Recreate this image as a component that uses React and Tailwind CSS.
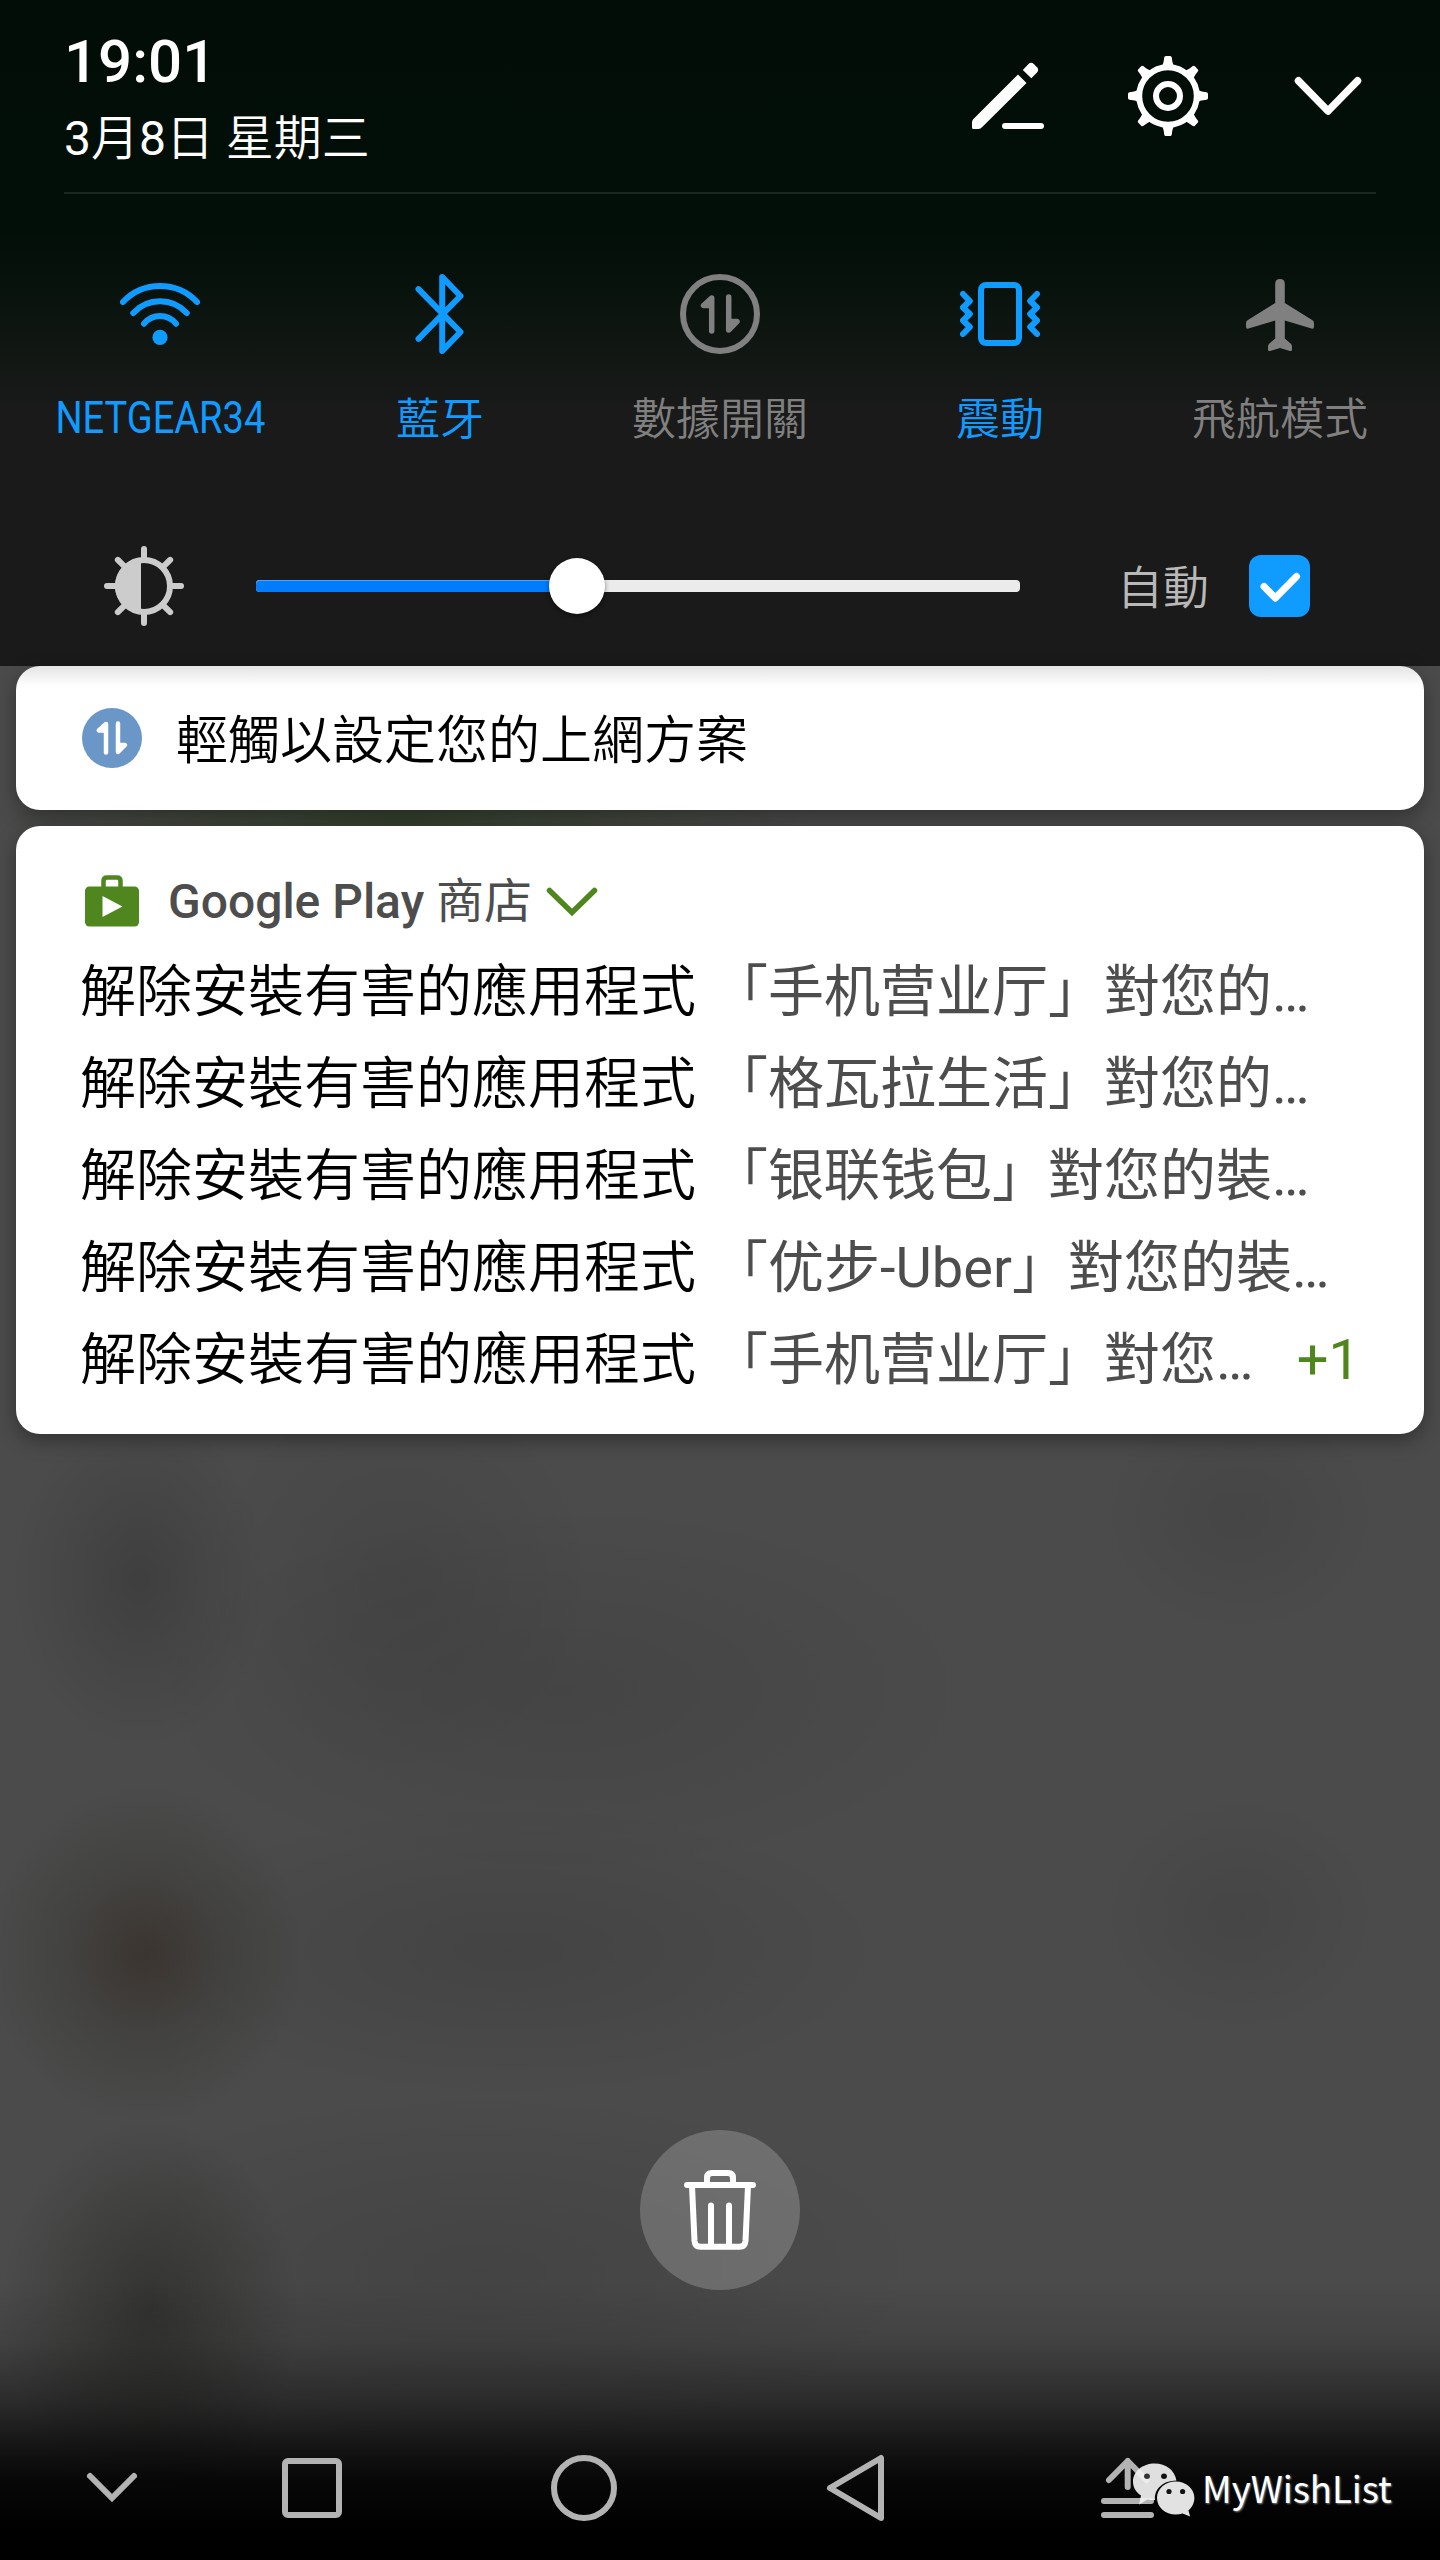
import { useState } from 'react';

const BLUE = '#0f9bff';
const GREY = '#808080';

const notifications = [
  { title: '解除安裝有害的應用程式', body: '「手机营业厅」對您的…' },
  { title: '解除安裝有害的應用程式', body: '「格瓦拉生活」對您的…' },
  { title: '解除安裝有害的應用程式', body: '「银联钱包」對您的裝…' },
  { title: '解除安裝有害的應用程式', body: '「优步-Uber」對您的裝…' },
  { title: '解除安裝有害的應用程式', body: '「手机营业厅」對您…', more: '+1' },
];

const PencilIcon = () => (
  <svg width="80" height="80" viewBox="0 0 80 80" fill="#fff">
    <path d="M50 18.5 L58.5 27 L14 71.2 Q12.5 73 10.5 73 H5.5 Q4 73 4 71.5 V66.5 Q4 64.5 5.2 63.2 Z" />
    <path d="M54.8 14 L60.5 8 Q63 5.5 65.8 8 L69 11.2 Q71.3 13.8 69 16.4 L63.3 22.3 Z" />
    <rect x="34" y="67" width="42" height="6" rx="3" />
  </svg>
);

const GearIcon = () => (
  <svg width="80" height="80" viewBox="0 0 80 80">
    {[0, 45, 90, 135, 180, 225, 270, 315].map((angle) => (
      <path
        key={angle}
        d="M33 11 Q35.6 9 36.2 1.6 Q36.4 0 38 0 H42 Q43.6 0 43.8 1.6 Q44.4 9 47 11 Z"
        fill="#fff"
        transform={`rotate(${angle} 40 40)`}
      />
    ))}
    <circle cx="40" cy="40" r="28.8" fill="none" stroke="#fff" strokeWidth="6" />
    <circle cx="40" cy="40" r="12" fill="none" stroke="#fff" strokeWidth="6" />
  </svg>
);

const ExpandIcon = () => (
  <svg width="80" height="80" viewBox="0 0 80 80" fill="none" stroke="#fff" strokeWidth="7.5" strokeLinecap="round" strokeLinejoin="round">
    <path d="M10.5 24.8 L40 55 L69.5 24.8" />
  </svg>
);

const WifiIcon = () => (
  <svg width="80" height="80" viewBox="0 0 80 80" fill="none" stroke={BLUE} strokeWidth="6" strokeLinecap="round">
    <path d="M3 28 A50.8 50.8 0 0 1 77 28" />
    <path d="M13.3 39 A36.4 36.4 0 0 1 66.7 39" />
    <path d="M24 49.7 A20.5 20.5 0 0 1 56 49.7" />
    <circle cx="40" cy="63.4" r="7.6" fill={BLUE} stroke="none" />
  </svg>
);

const BluetoothIcon = () => (
  <svg width="80" height="80" viewBox="0 0 80 80" fill="none" stroke={BLUE} strokeWidth="6" strokeLinecap="round" strokeLinejoin="round">
    <path d="M18.5 15.2 L60.5 58 L42.2 77 V3 L60.5 22 L18.5 64.8" />
  </svg>
);

const DataIcon = () => (
  <svg width="80" height="80" viewBox="0 0 80 80">
    <circle cx="40" cy="40" r="37" fill="none" stroke={GREY} strokeWidth="6" />
    <path d="M31.7 57 V24 L23.5 31.5 H31.7 M48.7 23 V56 L57 47.5 H48.7" fill={GREY} stroke={GREY} strokeWidth="5.5" strokeLinecap="round" strokeLinejoin="round" />
  </svg>
);

const VibrateIcon = () => (
  <svg width="80" height="80" viewBox="0 0 80 80" fill="none" stroke={BLUE} strokeWidth="6" strokeLinecap="round" strokeLinejoin="round">
    <rect x="21" y="11" width="38" height="58" rx="5" />
    <path d="M3 20 L9.8 27 L3 33.5 L9.8 40 L3 46.5 L9.8 53 L3 60" />
    <path d="M77 20 L70.2 27 L77 33.5 L70.2 40 L77 46.5 L70.2 53 L77 60" />
  </svg>
);

const AirplaneIcon = () => (
  <svg width="80" height="80" viewBox="0 0 80 80" fill={GREY}>
    <path d="M35.2 9.8 Q35.2 5 40 5 Q44.8 5 44.8 9.8 V29 L72.5 46.2 Q74 47.3 74 49 V52.5 Q74 55.4 71.5 54.6 L44.8 46.5 V64.5 L50.8 69.8 Q52 71 52 72.3 V75.5 Q52 77.5 50 77 L40 74 L30 77 Q28 77.5 28 75.5 V72.3 Q28 71 29.2 69.8 L35.2 64.5 V46.5 L8.5 54.6 Q6 55.4 6 52.5 V49 Q6 47.3 7.5 46.2 L35.2 29 Z" />
  </svg>
);

const BrightnessIcon = () => (
  <svg width="80" height="80" viewBox="0 0 80 80" fill="none" stroke="#cccccc" strokeWidth="6" strokeLinecap="round">
    <circle cx="40" cy="40" r="26" />
    <path d="M37 14 V66 A26 26 0 0 1 37 14 Z" fill="#cccccc" stroke="none" />
    {[0, 45, 90, 135, 180, 225, 270, 315].map((angle) => (
      <path key={angle} d="M40 3 V12" transform={`rotate(${angle} 40 40)`} />
    ))}
  </svg>
);

const BagIcon = () => (
  <svg width="54" height="52" viewBox="0 0 54 52">
    <path d="M18.5 13 V6 Q18.5 2.5 22 2.5 H32 Q35.5 2.5 35.5 6 V13" fill="none" stroke="#4f861d" strokeWidth="4.5" />
    <rect y="11.5" width="54" height="40" rx="4.5" fill="#4f861d" />
    <path d="M17.5 21 V42 L37.5 31.5 Z" fill="#fff" />
  </svg>
);

const TrashIcon = () => (
  <svg width="80" height="80" viewBox="0 0 80 80" fill="none" stroke="#fff" strokeWidth="6" strokeLinecap="round" strokeLinejoin="round">
    <path d="M7 15 H73" />
    <path d="M27 14 V8 Q27 3 32 3 H48 Q53 3 53 8 V14" />
    <path d="M12 16 L14.5 71 Q15 76.7 20.5 76.7 H59.5 Q65 76.7 65.5 71 L68 16" />
    <path d="M31 35.5 V76 M49 35.5 V76" />
  </svg>
);

const WeChatLogo = () => (
  <svg width="64" height="56" viewBox="0 0 64 56">
    <path d="M22.8 1.5 C10.5 1.5 1 9.5 1 19.6 C1 25.5 4 30.4 9 33.6 L7 42.5 L15.5 37.4 C18 38 20.5 38.2 23 38 C22 27 31 18.8 44.4 18.6 C43 8.5 34 1.5 22.8 1.5 Z" fill="#f0f0f0" fillOpacity="0.93" />
    <ellipse cx="15" cy="14.2" rx="2.9" ry="2.7" fill="#333" />
    <ellipse cx="32" cy="14.2" rx="2.9" ry="2.7" fill="#111" />
    <path d="M43.7 19.6 C33.3 19.6 25 26.8 25 36 C25 45.2 33.3 52.6 43.7 52.6 C46 52.6 48.3 52.3 50.5 51.6 L58.2 54.6 L56.4 48.4 C60 45.4 62.4 41 62.4 36 C62.4 26.8 54 19.6 43.7 19.6 Z" fill="#e2e2e2" />
    <ellipse cx="37" cy="29.5" rx="2.6" ry="2.6" fill="#111" />
    <ellipse cx="50.6" cy="29.5" rx="2.6" ry="2.6" fill="#111" />
  </svg>
);

const toggles = [
  { label: 'NETGEAR34', icon: WifiIcon, active: true, narrow: true },
  { label: '藍牙', icon: BluetoothIcon, active: true },
  { label: '數據開關', icon: DataIcon, active: false },
  { label: '震動', icon: VibrateIcon, active: true },
  { label: '飛航模式', icon: AirplaneIcon, active: false },
];

const Header = () => (
  <header className="mx-16 flex h-[194px] justify-between border-b-2 border-[#1c2620]">
    <div className="pt-[26px] text-white">
      <div className="text-[60px] leading-[72px] font-medium">19:01</div>
      <div className="mt-[5px] text-[48px] leading-[72px]">
        3<span className="font-[350]">月</span>8<span className="font-[350]">日 星期三</span>
      </div>
    </div>
    <div className="flex h-20 gap-20 pt-14 pr-2">
      <button><PencilIcon /></button>
      <button><GearIcon /></button>
      <button><ExpandIcon /></button>
    </div>
  </header>
);

const QuickToggles = () => (
  <div className="flex justify-center pt-20">
    {toggles.map(({ label, icon: Icon, active, narrow }) => (
      <div key={label} className="flex w-[280px] flex-col items-center">
        <Icon />
        <span
          className={`text-[44px] leading-[64px] whitespace-nowrap ${narrow ? 'mt-8 scale-x-[0.865]' : 'mt-[34px] font-[350]'} ${
            active ? 'text-[#0f9bff]' : 'text-[#808080]'
          }`}
        >
          {label}
        </span>
      </div>
    ))}
  </div>
);

const BrightnessRow = ({ auto, onToggle }) => (
  <div className="mt-[94px] flex h-20 items-center pl-[104px]">
    <BrightnessIcon />
    <div className="relative ml-[72px] flex h-3 w-[764px] rounded-[4px] bg-[#ebebeb]">
      <div className="h-3 w-[321px] rounded-l-[4px] border-t border-[#4da3ff] bg-[#007cff]" />
      <div className="absolute -top-[22px] left-[293px] h-14 w-14 rounded-full bg-white shadow-[0_2px_5px_rgba(0,0,0,0.45)]" />
    </div>
    <span className="ml-[97px] w-[96px] pt-[3px] text-[46px] leading-[64px] font-[350] text-[#b8b8b8]">自動</span>
    <button onClick={onToggle} className="ml-[36px] flex h-[62px] w-[61px] items-center justify-center rounded-xl bg-[#0f9bff]">
      {auto && (
        <svg width="61" height="62" viewBox="0 0 61 62" fill="none" stroke="#fff" strokeWidth="7" strokeLinecap="round" strokeLinejoin="round">
          <path d="M15 31.5 L26.3 43 L47.5 21.5" />
        </svg>
      )}
    </button>
  </div>
);

const NavBar = () => (
  <nav className="mt-auto flex h-36 items-center text-[#b3b3b3]">
    <svg className="ml-[84px]" width="56" height="80" viewBox="0 0 56 80" fill="none" stroke="currentColor" strokeWidth="6" strokeLinecap="round">
      <path d="M6 28 L28 50 L50 28" />
    </svg>
    <svg className="ml-[132px]" width="80" height="80" viewBox="0 0 80 80" fill="none" stroke="currentColor" strokeWidth="6">
      <rect x="13" y="13" width="54" height="54" rx="3" />
    </svg>
    <svg className="ml-[192px]" width="80" height="80" viewBox="0 0 80 80" fill="none" stroke="currentColor" strokeWidth="6">
      <circle cx="40" cy="40" r="30" />
    </svg>
    <svg className="ml-[192px]" width="80" height="80" viewBox="0 0 80 80" fill="none" stroke="currentColor" strokeWidth="6" strokeLinejoin="round">
      <path d="M14 40 L65 10 V70 Z" />
    </svg>
    <div className="relative ml-[192px] h-20 w-20">
      <svg width="80" height="80" viewBox="0 0 80 80" fill="none" stroke="currentColor" strokeWidth="6" strokeLinecap="round" strokeLinejoin="round">
        <path d="M21 32 L39.7 13 L58.5 32 M39.7 13 V39" />
        <path d="M16 53 H63 M16 67 H63" />
      </svg>
      {/* watermark sits over the last nav icon */}
      <div className="absolute top-[14px] left-[44px] flex items-start">
        <WeChatLogo />
        <span className="ml-[6px] font-['Noto_Sans_CJK_TC',sans-serif] text-[36.5px] leading-[52px] text-white [text-shadow:1px_1px_2px_#888]">
          MyWishList
        </span>
      </div>
    </div>
  </nav>
);

export default function App() {
  const [auto, setAuto] = useState(true);

  return (
    <div
      lang="zh-Hant"
      className="h-[2560px] w-[1440px] overflow-hidden bg-[#4b4b4b] font-[Roboto,'Noto_Sans_CJK_TC',sans-serif]"
    >
      <div className="flex h-full flex-col bg-[linear-gradient(to_bottom,transparent_2280px,rgba(0,0,0,0.12)_2340px,rgba(0,0,0,0.42)_2400px,rgba(0,0,0,0.72)_2445px,rgba(0,0,0,0.9)_2480px,#000_2530px),radial-gradient(ellipse_130px_170px_at_140px_1580px,rgba(0,0,0,0.17),rgba(0,0,0,0.08)_50%,transparent),radial-gradient(ellipse_80px_80px_at_145px_1955px,rgba(60,20,12,0.14),transparent),radial-gradient(ellipse_160px_170px_at_145px_1955px,rgba(18,14,0,0.28),rgba(18,14,0,0.14)_50%,transparent),radial-gradient(ellipse_150px_190px_at_150px_2310px,rgba(8,8,0,0.34),rgba(8,8,0,0.15)_55%,transparent),radial-gradient(ellipse_200px_200px_at_400px_1580px,rgba(0,0,0,0.08),transparent),radial-gradient(ellipse_420px_190px_at_560px_1690px,rgba(0,0,0,0.09),transparent),radial-gradient(ellipse_380px_150px_at_510px_1950px,rgba(0,0,0,0.1),transparent),radial-gradient(ellipse_450px_180px_at_480px_2270px,rgba(0,0,0,0.1),transparent),radial-gradient(ellipse_140px_120px_at_1240px_1515px,rgba(0,0,0,0.08),transparent),radial-gradient(ellipse_140px_120px_at_1240px_1915px,rgba(0,0,0,0.08),transparent),radial-gradient(ellipse_420px_60px_at_400px_818px,rgba(20,50,0,0.4),transparent)]">
        <section className="h-[666px] shrink-0 bg-[linear-gradient(to_bottom,#020d07_0px,#020e08_230px,#0b140f_310px,#191a19_410px,#1a1a1a_470px)]">
          <Header />
          <QuickToggles />
          <BrightnessRow auto={auto} onToggle={() => setAuto(!auto)} />
        </section>

        <main className="flex flex-col gap-4 px-4">
          <div className="flex h-36 items-center rounded-[24px] bg-[linear-gradient(to_bottom,#e4e4e4,#fff_20px)] px-[66px] shadow-[0_6px_20px_rgba(0,0,0,0.35)]">
            <svg width="60" height="60" viewBox="0 0 60 60">
              <circle cx="30" cy="30" r="30" fill="#6a96c8" />
              <path d="M24 44.5 V16 L16.8 22.5 H24 M36 15.5 V44 L43 37 H36" fill="#fff" stroke="#fff" strokeWidth="4.5" strokeLinecap="round" strokeLinejoin="round" />
            </svg>
            <span className="ml-[34px] pt-2 text-[52px] leading-[76px] font-[350] text-black">輕觸以設定您的上網方案</span>
          </div>

          <div className="h-[608px] rounded-[24px] bg-white px-16 pt-[38px] shadow-[0_6px_20px_rgba(0,0,0,0.35)]">
            <div className="flex h-[74px] items-center pl-[5px]">
              <BagIcon />
              <span className="ml-[29px] pt-[2px] text-[48px] leading-[72px] text-[#4d4d4d]">
                <span className="font-medium">Google Play </span>商店
              </span>
              <svg className="ml-[14px] mt-[2px]" width="52" height="32" viewBox="0 0 52 32" fill="none" stroke="#4f861d" strokeWidth="5.5" strokeLinecap="round">
                <path d="M3.5 4.5 L26 26.5 L48.5 4.5" />
              </svg>
            </div>
            <ul className="pt-2">
              {notifications.map((item, index) => (
                <li key={index} className="flex h-[92px] items-center text-[56px] leading-[84px] whitespace-nowrap">
                  <span className="font-[350] text-black">{item.title}</span>
                  <span className="ml-4 text-[#4d4d4d]">{item.body}</span>
                  {item.more && <span className="ml-auto text-[#4f861d]">{item.more}</span>}
                </li>
              ))}
            </ul>
          </div>
        </main>

        <button className="mt-[696px] flex h-40 w-40 shrink-0 items-center justify-center self-center rounded-full bg-white/20">
          <TrashIcon />
        </button>

        <NavBar />
      </div>
    </div>
  );
}
